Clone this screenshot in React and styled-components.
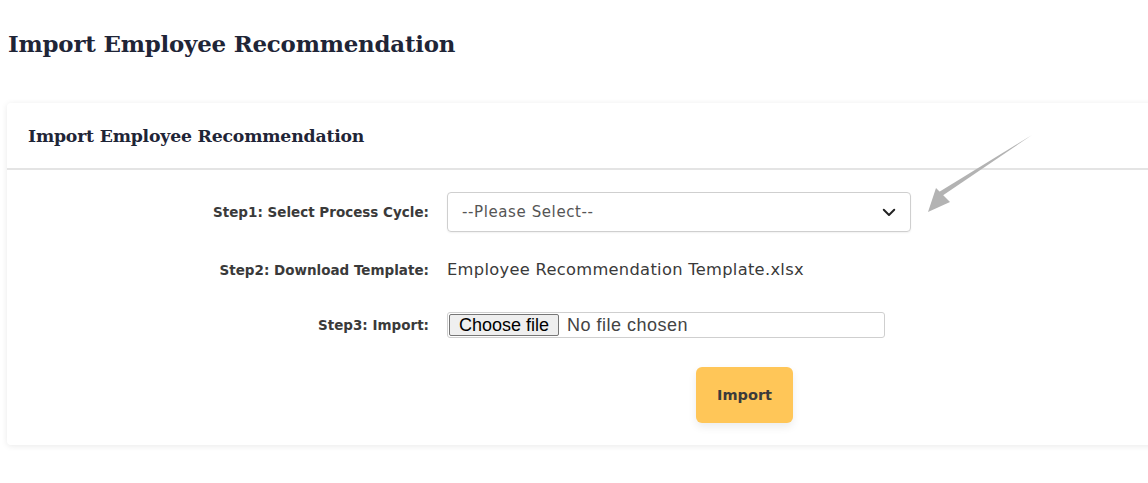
import React from "react";
import styled, { createGlobalStyle } from "styled-components";

const GlobalStyle = createGlobalStyle`
  html, body {
    margin: 0;
    padding: 0;
    background: #ffffff;
    overflow: hidden;
  }
  body {
    font-family: "DejaVu Sans", Inter, sans-serif;
    color: #333;
  }
`;

const Page = styled.div`
  position: relative;
  width: 1148px;
  height: 483px;
  padding: 26px 0 0 7px;
  box-sizing: border-box;
`;

const PageTitle = styled.h1`
  margin: 0 0 0 1px;
  font-family: "DejaVu Serif", serif;
  font-size: 22.9px;
  font-weight: 600;
  color: #1f2537;
  letter-spacing: -0.2px;
  line-height: 36px;
`;

const Card = styled.div`
  margin-top: 41px;
  width: 1170px;
  background: #fff;
  border-radius: 4px;
  box-shadow: 0 1px 6px rgba(0, 0, 0, 0.09);
`;

const CardHeader = styled.div`
  height: 65px;
  display: flex;
  align-items: center;
  padding-left: 21px;
  border-bottom: 2px solid #e4e4e4;
`;

const CardTitle = styled.h2`
  margin: 0;
  font-family: "DejaVu Serif", serif;
  font-size: 17.3px;
  font-weight: 600;
  color: #1f2537;
  letter-spacing: -0.2px;
`;

const CardBody = styled.div`
  padding: 22px 0 22px;
  display: grid;
  grid-template-columns: 422px 464px;
  column-gap: 18px;
  align-items: center;
`;

const Label = styled.label`
  text-align: right;
  font-size: 13.5px;
  font-weight: 700;
  color: #3a3a3a;
  height: ${(p) => p.$h}px;
  line-height: ${(p) => p.$h}px;
  margin: ${(p) => p.$m || "0"};
`;

const SelectBox = styled.div`
  height: 40px;
  box-sizing: border-box;
  border: 1px solid #cfcfcf;
  border-radius: 4px;
  display: flex;
  align-items: center;
  justify-content: space-between;
  padding: 0 12px 0 14px;
  font-size: 15px;
  letter-spacing: 0.6px;
  color: #555;
  box-shadow: 0 1px 2px rgba(0, 0, 0, 0.06);
`;

const TemplateLink = styled.div`
  font-size: 16.3px;
  letter-spacing: 0.3px;
  color: #3a3a3a;
  height: 40px;
  line-height: 40px;
  margin: 18px 0 22px;
`;

const FileInput = styled.div`
  width: 438px;
  height: 26px;
  box-sizing: border-box;
  border: 1px solid #cfcfcf;
  border-radius: 3px;
  display: flex;
  align-items: center;
  font-family: "Liberation Sans", Arial, sans-serif;
  font-size: 18px;
  color: #333;
  overflow: hidden;
`;

const FileButton = styled.span`
  height: 22px;
  margin-left: 1px;
  padding: 0 9px;
  display: flex;
  align-items: center;
  background: #efefef;
  border: 1px solid #767676;
  border-radius: 2px;
  color: #000;
  box-sizing: border-box;
`;

const FileName = styled.span`
  margin-left: 8px;
  letter-spacing: 0.5px;
  color: #444;
`;

const ButtonCell = styled.div`
  grid-column: 2;
  padding-left: 249px;
  margin-top: 29px;
`;

const ImportButton = styled.button`
  width: 97px;
  height: 56px;
  border: none;
  border-radius: 6px;
  background: #ffc658;
  font-family: "DejaVu Sans", sans-serif;
  font-size: 14.5px;
  font-weight: 700;
  color: #3b3b3b;
  box-shadow: 0 4px 8px rgba(0, 0, 0, 0.08);
`;

const Arrow = styled.svg`
  position: absolute;
  left: 920px;
  top: 130px;
`;

const Chevron = () => (
  <svg width="18" height="18" viewBox="0 0 24 24" fill="none" stroke="#222" strokeWidth="2.6" strokeLinecap="round" strokeLinejoin="round">
    <path d="M5 9l7 7 7-7" />
  </svg>
);

export default function App() {
  return (
    <>
      <GlobalStyle />
      <Page>
        <PageTitle>Import Employee Recommendation</PageTitle>
        <Card>
          <CardHeader>
            <CardTitle>Import Employee Recommendation</CardTitle>
          </CardHeader>
          <CardBody>
            <Label $h={40}>Step1: Select Process Cycle:</Label>
            <SelectBox>
              <span>--Please Select--</span>
              <Chevron />
            </SelectBox>
            <Label $h={40} $m="18px 0 22px">
              Step2: Download Template:
            </Label>
            <TemplateLink>Employee Recommendation Template.xlsx</TemplateLink>
            <Label $h={26}>Step3: Import:</Label>
            <FileInput>
              <FileButton>Choose file</FileButton>
              <FileName>No file chosen</FileName>
            </FileInput>
            <ButtonCell>
              <ImportButton>Import</ImportButton>
            </ButtonCell>
          </CardBody>
        </Card>
        <Arrow width="120" height="90" viewBox="0 0 120 90">
          <path d="M112 5 L22 66 L19 62 Z" fill="#b3b3b3" />
          <path d="M8 82 L16 58 L30 72 Z" fill="#b3b3b3" />
        </Arrow>
      </Page>
    </>
  );
}
